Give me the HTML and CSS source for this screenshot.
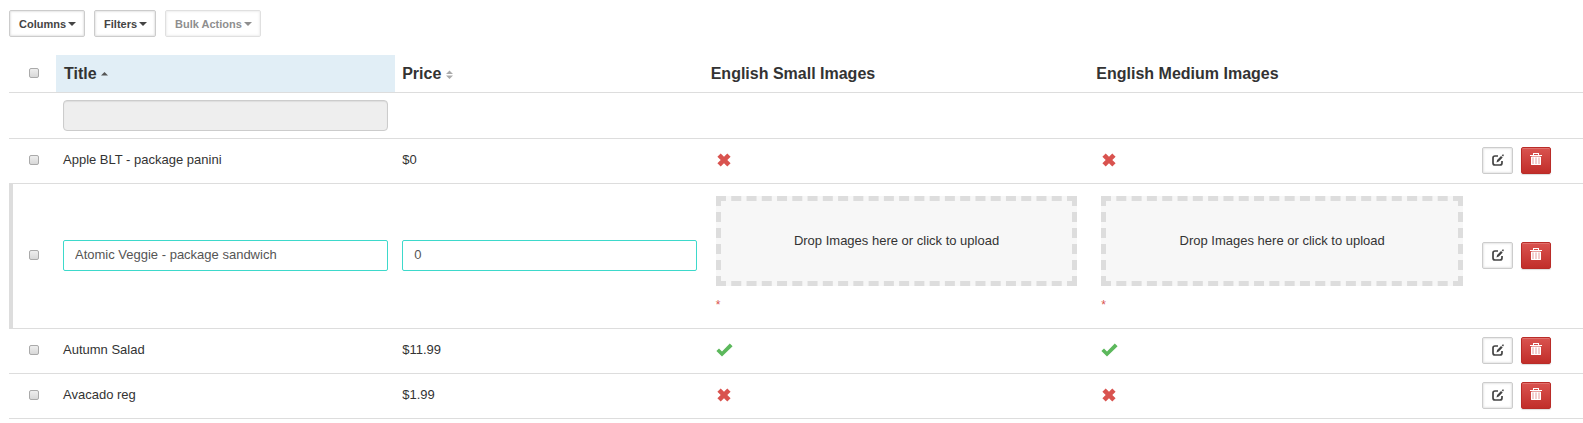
FILE: index.html
```html
<!DOCTYPE html>
<html lang="en">
<head>
<meta charset="utf-8">
<title>Products</title>
<link rel="stylesheet" href="styles.css">
</head>
<body>
<svg class="sprite" aria-hidden="true">
  <symbol id="cross" viewBox="0 0 14 14"><path fill="currentColor" d="M3.7.4 7 3.7 10.3.4l3.3 3.3L10.3 7l3.3 3.3-3.3 3.3L7 10.3l-3.3 3.3L.4 10.3 3.7 7 .4 3.700z"/></symbol>
  <symbol id="check" viewBox="0 0 17 14"><path fill="currentColor" d="M13.800.5 16.600 3.300 6 13.600.4 8 3 5.400l3 3z"/></symbol>
  <symbol id="edit" viewBox="0 0 12 12"><path fill="none" stroke="currentColor" stroke-width="1.700" d="M6 2H3Q1 2 1 4v5q0 2 2 2h5q2 0 2-2V7"/><path fill="currentColor" d="m4.500 8.500.6-2.600L9 2l1.700 1.600-3.900 4zM9.700 1.300l.9-.8h1.100v1.200l-.7.9z"/></symbol>
  <symbol id="trash" viewBox="0 0 12 12"><path fill="currentColor" d="M3 0h6v1H3zM3 1h1v1H3zM8 1h1v1H8zM0 2h12v1H0z"/><path fill="currentColor" opacity=".75" d="M1 4h10v8H1z"/><path stroke="currentColor" fill="none" d="M1.500 4v7.500h9V4zM4.500 4v7M7.500 4v7"/></symbol>
</svg>
<div class="toolbar">
  <button class="btn" type="button">Columns <span class="caret"></span></button>
  <button class="btn" type="button">Filters <span class="caret"></span></button>
  <button class="btn" type="button" disabled>Bulk Actions <span class="caret"></span></button>
</div>
<table class="grid">
  <colgroup><col class="col-check"><col class="col-title"><col class="col-price"><col><col><col class="col-actions"></colgroup>
  <thead>
    <tr class="head">
      <th class="check"><input type="checkbox" class="box" aria-label="Select all"></th>
      <th class="sorted">Title <svg class="sort" viewBox="0 0 7 9"><path fill="#555" d="M0 5.500 3.500 2 7 5.500z"/></svg></th>
      <th>Price <svg class="sort" viewBox="0 0 7 9"><path fill="#aaa" d="M0 4 3.500.5 7 4zM0 5.500h7L3.500 9z"/></svg></th>
      <th>English Small Images</th>
      <th>English Medium Images</th>
      <th></th>
    </tr>
    <tr class="filter">
      <td></td>
      <td><input type="text" class="field filter-field" aria-label="Filter by title" disabled></td>
      <td></td><td></td><td></td><td></td>
    </tr>
  </thead>
  <tbody>
    <tr>
      <td class="check"><input type="checkbox" class="box" aria-label="Select Apple BLT"></td>
      <td>Apple BLT - package panini</td>
      <td>$0</td>
      <td class="image"><svg class="cross"><use href="#cross"/></svg></td>
      <td class="image"><svg class="cross"><use href="#cross"/></svg></td>
      <td><div class="actions"><button class="btn" type="button" aria-label="Edit"><svg class="icon"><use href="#edit"/></svg></button><button class="btn danger" type="button" aria-label="Delete"><svg class="icon"><use href="#trash"/></svg></button></div></td>
    </tr>
    <tr class="editing">
      <td class="check"><input type="checkbox" class="box" aria-label="Select Atomic Veggie"></td>
      <td><input type="text" class="field" aria-label="Title" value="Atomic Veggie - package sandwich"></td>
      <td><input type="text" class="field" aria-label="Price" value="0"></td>
      <td class="image"><button type="button" class="drop">Drop Images here or click to upload</button><p class="required">*</p></td>
      <td class="image"><button type="button" class="drop">Drop Images here or click to upload</button><p class="required">*</p></td>
      <td><div class="actions"><button class="btn" type="button" aria-label="Edit"><svg class="icon"><use href="#edit"/></svg></button><button class="btn danger" type="button" aria-label="Delete"><svg class="icon"><use href="#trash"/></svg></button></div></td>
    </tr>
    <tr>
      <td class="check"><input type="checkbox" class="box" aria-label="Select Autumn Salad"></td>
      <td>Autumn Salad</td>
      <td>$11.99</td>
      <td class="image"><svg class="tick"><use href="#check"/></svg></td>
      <td class="image"><svg class="tick"><use href="#check"/></svg></td>
      <td><div class="actions"><button class="btn" type="button" aria-label="Edit"><svg class="icon"><use href="#edit"/></svg></button><button class="btn danger" type="button" aria-label="Delete"><svg class="icon"><use href="#trash"/></svg></button></div></td>
    </tr>
    <tr>
      <td class="check"><input type="checkbox" class="box" aria-label="Select Avacado reg"></td>
      <td>Avacado reg</td>
      <td>$1.99</td>
      <td class="image"><svg class="cross"><use href="#cross"/></svg></td>
      <td class="image"><svg class="cross"><use href="#cross"/></svg></td>
      <td><div class="actions"><button class="btn" type="button" aria-label="Edit"><svg class="icon"><use href="#edit"/></svg></button><button class="btn danger" type="button" aria-label="Delete"><svg class="icon"><use href="#trash"/></svg></button></div></td>
    </tr>
  </tbody>
</table>
</body>
</html>
```
FILE: styles.css
```css
* { box-sizing: border-box; }
body {
  margin: 0;
  padding: 10px 0 0 9px;
  background: #fff;
  color: #333;
  font: 13px/18px "Liberation Sans", Arial, sans-serif;
}
.sprite { display: none; }
.toolbar { display: flex; gap: 9px; margin-bottom: 18px; }
.btn {
  display: flex;
  align-items: center;
  justify-content: center;
  gap: 2px;
  height: 27px;
  padding: 0 8px 0 9px;
  border: 1px solid #ccc;
  border-radius: 2px;
  background: #fff;
  box-shadow: inset 0 0 2px 1px #e6e6e6;
  color: #444;
  font: bold 11px/16px "Liberation Sans", Arial, sans-serif;
}
.btn:disabled { opacity: .6; }
.caret {
  border: 4px solid transparent;
  border-top-color: currentColor;
  border-bottom: 0;
}
.grid {
  width: 100%;
  table-layout: fixed;
  border-collapse: separate;
  border-spacing: 0;
}
.col-check { width: 47px; }
.col-title { width: 21.55%; }
.col-price { width: 19.6%; }
.col-actions { width: 108px; }
th, td {
  height: 45px;
  padding: 0 7px 2px;
  border-bottom: 1px solid #ddd;
  text-align: left;
  vertical-align: middle;
}
th {
  height: 38px;
  padding: 0 7px;
  font-size: 16px;
  line-height: 20px;
}
.sorted { padding-left: 8px; background: #e1eef6; }
.sort { width: 7px; height: 9px; }
.filter td { height: 46px; padding-bottom: 0; }
.check { padding: 0 0 2px 20px; }
.box {
  display: block;
  appearance: none;
  width: 10px;
  height: 10px;
  margin: 0;
  border: 1px solid #aaa;
  border-radius: 2px;
  background: linear-gradient(#eee, #d8d8d8);
}
.field {
  display: block;
  width: 100%;
  height: 31px;
  padding: 0 11px 2px;
  border: 1px solid #3dd9cb;
  border-radius: 2px;
  background: #fff;
  color: #555;
  font: inherit;
}
.filter-field {
  border-color: #ccc;
  border-radius: 4px;
  background: #eee;
  box-shadow: inset 0 1px 1px #ddd;
}
.image { padding: 0 12px 2px; }
.cross, .tick { display: block; height: 14px; }
.cross { width: 14px; margin-left: 1px; color: #d9534f; }
.tick { width: 17px; color: #5cb85c; }
.actions { display: flex; gap: 8px; }
.actions .btn { width: 31px; padding: 0; }
.actions .danger {
  width: 30px;
  padding-bottom: 2px;
  border-color: #b92c28;
  background: linear-gradient(#d9534f, #c12e2a);
  box-shadow: inset 0 1px 0 #e0716d, 0 1px 1px #ddd;
  color: #fff;
}
.icon { width: 12px; height: 12px; }
.editing .image { padding-top: 12px; vertical-align: top; }
.editing .check { padding-left: 16px; border-left: 4px solid #ddd; }
.drop {
  display: block;
  width: 100%;
  height: 90px;
  border: 5px dashed #ddd;
  background: #f7f7f7;
  color: #333;
  font: inherit;
}
.required {
  margin: 10px 0 12px;
  color: #d9534f;
  font-size: 12px;
  line-height: 18px;
}
```
